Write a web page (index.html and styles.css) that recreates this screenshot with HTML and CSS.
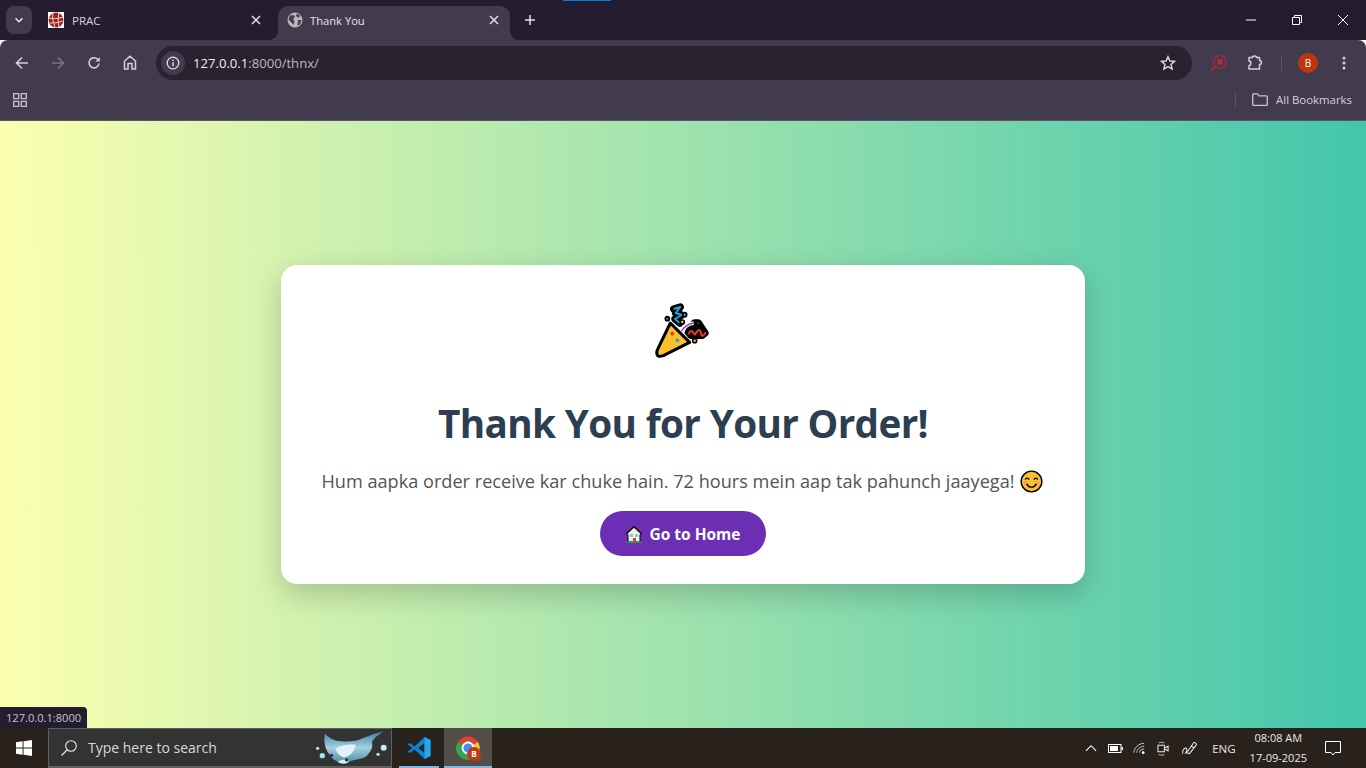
FILE: index.html
```html
<!DOCTYPE html>
<html lang="en">
<head>
    <meta charset="UTF-8">
    <meta name="viewport" content="width=device-width, initial-scale=1.0">
    <title>Thank You</title>
    <link rel="stylesheet" href="styles.css">
</head>
<body>

    <!-- Tab strip -->
    <div class="tabstrip">
        <div class="tab-search">
            <svg width="10" height="10" viewBox="0 0 10 10"><path d="M1.500 3.200 5 6.700l3.500-3.500" fill="none" stroke="#e8e3ec" stroke-width="1.600"/></svg>
        </div>
        <div class="tab tab-idle">
            <svg width="16" height="16" viewBox="0 0 16 16">
                <rect width="16" height="16" fill="#fff"/>
                <circle cx="8" cy="8" r="7.400" fill="#a3201f"/>
                <path d="M1 6c4 1 9 1 14-1M1.500 11c4 0 9 0 13-2M5 1c-1 4 0 10 2 14M11 1c-1 4-1 9 0 14" fill="none" stroke="#f2d6d4" stroke-width="1"/>
            </svg>
            <span class="tab-title">PRAC</span>
            <svg width="10" height="10" viewBox="0 0 10 10"><path d="M1 1l8 8M9 1l-8 8" stroke="#e4dfe8" stroke-width="1.500"/></svg>
        </div>
        <div class="tab tab-active">
            <svg width="16" height="16" viewBox="0 0 16 16">
                <circle cx="8" cy="8" r="7.500" fill="#b9b4bd"/>
                <path d="M3 3.500 6.500 3 8 5 6 7 7.500 9 6.500 13 4 10 1.500 7.500zM10 1.500l3.500 2.500-2.500 1.500-2-1.500zM11 8l3.500 0-1.500 4.500-2.500 1z" fill="#453c4e"/>
            </svg>
            <span class="tab-title">Thank You</span>
            <svg width="10" height="10" viewBox="0 0 10 10"><path d="M1 1l8 8M9 1l-8 8" stroke="#e4dfe8" stroke-width="1.500"/></svg>
        </div>
        <svg class="new-tab" width="10" height="10" viewBox="0 0 10 10"><path d="M5 0v10M0 5h10" stroke="#e4dfe8" stroke-width="1.500"/></svg>
        <div class="window-btns">
            <svg width="10" height="10" viewBox="0 0 10 10"><path d="M0 5h10" stroke="#fff" stroke-width="1"/></svg>
            <svg width="10" height="10" viewBox="0 0 10 10"><path d="M.5 2.500h7v7h-7zM2.500 2.500V.5h7v7H7.500" fill="none" stroke="#fff" stroke-width="1"/></svg>
            <svg width="10" height="10" viewBox="0 0 10 10"><path d="M0 0l10 10M10 0 0 10" stroke="#fff" stroke-width="1"/></svg>
        </div>
    </div>

    <!-- Toolbar with address bar -->
    <div class="toolbar">
        <div class="nav-btns">
            <svg width="14" height="14" viewBox="0 0 14 14"><path d="M13 7H2M7 1.500 1.500 7 7 12.500" fill="none" stroke="#d6d0da" stroke-width="1.600"/></svg>
            <svg width="14" height="14" viewBox="0 0 14 14"><path d="M1 7h11M7 1.500 12.500 7 7 12.500" fill="none" stroke="#7b7482" stroke-width="1.600"/></svg>
            <svg width="14" height="14" viewBox="0 0 14 14"><path d="M12 7.500A5 5 0 1 1 10.500 3.200" fill="none" stroke="#d6d0da" stroke-width="1.600"/><path d="M12.800 1v4.500H8.300z" fill="#d6d0da"/></svg>
            <svg width="14" height="15" viewBox="0 0 14 15"><path d="M1.500 14V6L7 1.200 12.500 6v8H9V8.500H5V14z" fill="none" stroke="#d6d0da" stroke-width="1.500"/></svg>
        </div>
        <div class="omnibox">
            <div class="site-info">
                <svg width="14" height="14" viewBox="0 0 14 14"><circle cx="7" cy="7" r="5.800" fill="none" stroke="#e4dfe8" stroke-width="1.300"/><path d="M7 6.200v4M7 3.600v1.400" stroke="#e4dfe8" stroke-width="1.400"/></svg>
            </div>
            <span class="url"><span class="url-host">127.0.0.1</span>:8000/thnx/</span>
            <svg width="16" height="16" viewBox="0 0 16 16"><path d="M8 1.700 9.900 6l4.600.4-3.500 3 1.100 4.600L8 11.600 3.900 14 5 9.400l-3.500-3L6.100 6z" fill="none" stroke="#e0dbe4" stroke-width="1.400"/></svg>
        </div>
        <div class="toolbar-right">
            <svg width="18" height="18" viewBox="0 0 18 18"><circle cx="10" cy="8" r="6.300" fill="none" stroke="#b32530" stroke-width="1.300"/><path d="M5.500 12.500 1 17" stroke="#b32530" stroke-width="1.800"/><path d="M7.500 5.500l5 5M12.500 5.500l-5 5" stroke="#c72a35" stroke-width="1.900"/></svg>
            <svg class="ext-icon" width="17" height="16" viewBox="0 0 17 16"><path d="M2 2.500h3.500c0-2 4-2 4 0h3v3c2.500 0 2.500 4 0 4v4.500H2v-3.500c2.500 0 2.500-4.500 0-4.500z" fill="none" stroke="#d6d0da" stroke-width="1.500" stroke-linejoin="round"/></svg>
            <div class="divider"></div>
            <div class="avatar">B</div>
            <svg class="menu-dots" width="4" height="14" viewBox="0 0 4 14"><circle cx="2" cy="2" r="1.500" fill="#d6d0da"/><circle cx="2" cy="7" r="1.500" fill="#d6d0da"/><circle cx="2" cy="12" r="1.500" fill="#d6d0da"/></svg>
        </div>
    </div>

    <!-- Bookmarks bar -->
    <div class="bookmarks">
        <svg width="14" height="14" viewBox="0 0 14 14"><path d="M.7.7h5v5h-5zM8.300.7h5v5h-5zM.7 8.300h5v5h-5zM8.300 8.300h5v5h-5z" fill="none" stroke="#c9c3ce" stroke-width="1.300"/></svg>
        <div class="all-bookmarks">
            <div class="divider divider-short"></div>
            <svg width="16" height="13" viewBox="0 0 16 13"><path d="M.7 11.500V1.700c0-.5.400-.9.900-.9h4l1.500 2h7.300c.5 0 .9.400.9.900v7.800c0 .5-.4.900-.9.900H1.600c-.5 0-.9-.4-.9-.9z" fill="none" stroke="#c9c3ce" stroke-width="1.300"/></svg>
            <span>All Bookmarks</span>
        </div>
    </div>

    <!-- Page -->
    <main class="page">
        <div class="card">
            <svg width="60" height="57" viewBox="70 40 180 171">
                <path d="M122 100 180 158 101 198Q78 206 82 183Z" fill="#fcc02d" stroke="#000" stroke-width="9" stroke-linejoin="round"/>
                <path d="M194 100 206 100 226 130 218 137 184 137 176 128Z" fill="#000" stroke="#000" stroke-width="22" stroke-linejoin="round"/>
                <path d="M132 58 152 52 138 70 156 76 136 88 150 100" fill="none" stroke="#000" stroke-width="22" stroke-linejoin="round" stroke-linecap="round"/>
                <path d="M132 58 152 52 138 70 156 76 136 88 150 100" fill="none" stroke="#22a5d8" stroke-width="6" stroke-linejoin="round"/>
                <path d="M176 134Q184 118 190 128T198 132 206 122 214 132 228 128" fill="none" stroke="#ea3a24" stroke-width="6"/>
                <path d="M155 125Q168 104 192 100" fill="none" stroke="#fff" stroke-width="10"/>
                <path d="M155 125Q168 104 192 100" fill="none" stroke="#7a4fc4" stroke-width="4"/>
                <g stroke="#000" stroke-width="5">
                    <circle cx="113" cy="87" r="6" fill="#7a4fc4"/>
                    <circle cx="165" cy="75" r="6" fill="#22a5d8"/>
                    <circle cx="158" cy="97" r="6" fill="#fce02d"/>
                    <circle cx="205" cy="100" r="5" fill="#ea3a24"/>
                    <circle cx="195" cy="153" r="6" fill="#fce02d"/>
                </g>
                <circle cx="128" cy="132" r="5.500" fill="#ea3a24"/>
                <circle cx="143" cy="152" r="5.500" fill="#22a5d8"/>
            </svg>
            <h1 class="card-title">Thank You for Your Order!</h1>
            <p class="card-text">Hum aapka order receive kar chuke hain. 72 hours mein aap tak pahunch jaayega!
                <svg width="23" height="23" viewBox="0 0 24 24">
                    <circle cx="12" cy="12" r="10.800" fill="#fcc02d" stroke="#000" stroke-width="1.500"/>
                    <circle cx="6" cy="14" r="2.200" fill="#f59a7c"/><circle cx="18" cy="14" r="2.200" fill="#f59a7c"/>
                    <path d="M5.500 10c1-2 3-2 4 0M14.500 10c1-2 3-2 4 0M7 14.500c2 4.500 8 4.500 10 0" fill="none" stroke="#000" stroke-width="1.400"/>
                </svg>
            </p>
            <a class="home-btn" href="#">
                <svg width="18" height="18" viewBox="0 0 18 18">
                    <path d="M3 8v9h12V8z" fill="#f4f1ec" stroke="#000" stroke-width="1"/>
                    <path d="M1 9 9 1.500 17 9" fill="#c9452c" stroke="#000" stroke-width="1.200"/>
                    <path d="M3 8.500 9 3l6 5.500v1H3z" fill="#f4f1ec"/>
                    <rect x="5" y="9" width="3" height="3" fill="#6fd0ec"/><rect x="10" y="9" width="3" height="3" fill="#6fd0ec"/>
                    <rect x="8" y="13" width="3" height="4" fill="#d8392b"/>
                    <path d="M1 17.300h16" stroke="#2e9a4a" stroke-width="1.400"/>
                </svg>
                Go to Home
            </a>
        </div>
        <div class="status-tip">127.0.0.1:8000</div>
    </main>

    <!-- Windows taskbar -->
    <footer class="taskbar">
        <div class="start-btn">
            <svg width="16" height="16" viewBox="0 0 17 17"><path d="M0 2.400 7 1.400v6.600H0zM8 1.300 17 0v8H8zM0 9h7v6.600L0 14.600zM8 9h9v8L8 15.700z" fill="#fff"/></svg>
        </div>
        <div class="search-box">
            <svg width="18" height="18" viewBox="0 0 18 18"><circle cx="11" cy="7" r="5.300" fill="none" stroke="#e8e8e8" stroke-width="1.100"/><path d="M7 11 1.500 16.500" stroke="#e8e8e8" stroke-width="1.300"/></svg>
            <span class="search-text">Type here to search</span>
            <svg width="73" height="35" viewBox="15 10 220 105">
                <defs>
                    <linearGradient id="rayFill" x1="0" y1="0" x2="0" y2="1">
                        <stop offset="0" stop-color="#3f7f9e"/>
                        <stop offset="0.5" stop-color="#a3cfe0"/>
                        <stop offset="1" stop-color="#4f8aa6"/>
                    </linearGradient>
                </defs>
                <circle cx="23" cy="65" r="5" fill="#b8e6f4"/>
                <circle cx="37" cy="87" r="8" fill="#a6e2f4"/>
                <circle cx="205" cy="83" r="5" fill="#b8e6f4"/>
                <circle cx="222" cy="63" r="9" fill="#c6eef8"/>
                <path d="M45 20C55 32 70 42 95 44 120 46 140 44 160 34 180 26 200 18 222 14 205 24 192 34 186 46 192 60 182 78 168 90 152 98 130 100 118 104 112 112 96 114 84 106 72 100 62 92 58 82 46 70 40 42 45 20Z" fill="url(#rayFill)"/>
                <path d="M76 66C92 54 116 52 138 54 136 70 124 86 106 92 92 92 82 80 76 66Z" fill="#e4f2f6"/>
                <path d="M84 106C92 98 108 98 118 104 112 112 96 114 84 106Z" fill="#dfeef3"/>
                <circle cx="65" cy="86" r="5" fill="#1c2f56"/>
                <circle cx="110" cy="100" r="5" fill="#1c2f56"/>
            </svg>
        </div>
        <div class="task-app task-vscode">
            <svg width="24" height="24" viewBox="0 0 24 24">
                <path d="M17.500 1 23.500 4v16l-6 3L7.500 13.500 2.800 17 .5 15.800 5.500 12 .5 8.200 2.800 7l4.700 3.500zM17.500 7l-6.300 5 6.300 5z" fill="#0a84d6"/>
                <path d="M17.500 1 23.500 4v16l-6 3z" fill="#27a6ee"/>
            </svg>
        </div>
        <div class="task-app task-chrome">
            <svg width="25" height="25" viewBox="0 0 25 25">
                <circle cx="12" cy="12" r="11.500" fill="#e3412f"/>
                <path d="M12 12 22 6a11.500 11.500 0 0 1-7 17.200z" fill="#f9c22e"/>
                <path d="M12 12 15 23.200A11.500 11.500 0 0 1 2 6z" fill="#32a350"/>
                <circle cx="12" cy="12" r="5.500" fill="#4a8af4" stroke="#fff" stroke-width="1.800"/>
                <circle cx="18" cy="18" r="7" fill="#c23a10"/>
                <text class="chrome-badge" x="18" y="21">B</text>
            </svg>
        </div>
        <div class="tray">
            <svg width="12" height="8" viewBox="0 0 13 8"><path d="M1 7 6.500 1.500 12 7" fill="none" stroke="#fff" stroke-width="1.200"/></svg>
            <svg width="15" height="9" viewBox="0 0 15 9"><rect x=".5" y=".5" width="12.500" height="8" fill="none" stroke="#fff"/><rect x="2" y="2" width="8" height="5" fill="#fff"/><rect x="13.500" y="3" width="1.500" height="3" fill="#fff"/></svg>
            <svg class="tray-wifi" width="13" height="14" viewBox="0 0 14 14"><g fill="none" stroke="#cfcfcf" stroke-width="1"><path d="M1 12C1 7 6 2 12 2"/><path d="M4 12c0-3 4-7 8-7"/><path d="M7 12c0-2 2-4 5-4"/></g><circle cx="11" cy="12" r="1.500" fill="#fff"/></svg>
            <svg width="12" height="17" viewBox="0 0 13 17"><path d="M1 5h7v7H1zM8 8l4-2v5l-4-2z" fill="none" stroke="#e8e8e8" stroke-width="1.100"/><path d="M2 2.500c2-1 4-1 6 0M2 15c2 1 4 1 6 0" fill="none" stroke="#cfcfcf"/></svg>
            <svg class="tray-pen" width="16" height="16" viewBox="0 0 17 16"><path d="M1 14c-1-3 1-6 3-6s1 5-1 6M5 13l7-10c1-2 4 0 3 2L8 14zM10 6l3 2" fill="none" stroke="#e8e8e8" stroke-width="1.100"/></svg>
            <span class="tray-lang">ENG</span>
            <div class="tray-clock"><span>08:08 AM</span><span>17-09-2025</span></div>
            <svg class="tray-notif" width="16" height="15" viewBox="0 0 16 15"><path d="M.5.500h15v11H10L8 14l-2-2.500H.5z" fill="none" stroke="#fff"/></svg>
        </div>
    </footer>

</body>
</html>
```

FILE: styles.css
```css
* {
    box-sizing: border-box;
}

body {
    margin: 0;
    height: 768px;
    overflow: hidden;
    display: flex;
    flex-direction: column;
    font-family: "Open Sans", "Liberation Sans", sans-serif;
}

svg {
    display: block;
    flex: none;
}

/* Browser tab strip */
.tabstrip {
    height: 40px;
    background-color: #241d30;
    display: flex;
    align-items: flex-start;
    padding: 6px 0 0 6px;
    position: relative;
}

.tabstrip::before {
    content: "";
    position: absolute;
    left: 563px;
    top: 0;
    width: 48px;
    height: 1px;
    background-color: #0a7bd8;
}

.tab-search {
    width: 26px;
    height: 28px;
    border-radius: 8px;
    background-color: #423a4d;
    display: flex;
    align-items: center;
    justify-content: center;
    margin-right: 6px;
}

.tab {
    height: 34px;
    padding-bottom: 6px;
    display: flex;
    align-items: center;
    gap: 8px;
    font-size: 11.5px;
    color: #d5d0d9;
    position: relative;
}

.tab-idle {
    width: 240px;
    padding-left: 10px;
    padding-right: 17px;
}

.tab-active {
    width: 232px;
    padding-left: 9px;
    padding-right: 11px;
    background-color: #423a4d;
    border-radius: 10px 10px 0 0;
    color: #e8e3ec;
    gap: 7px;
    font-size: 11.2px;
}

/* Curved feet on the active tab */
.tab-active::before,
.tab-active::after {
    content: "";
    position: absolute;
    bottom: 0;
    width: 10px;
    height: 10px;
}

.tab-active::before {
    left: -10px;
    background: radial-gradient(circle at 0 0, transparent 10px, #423a4d 10.5px);
}

.tab-active::after {
    right: -10px;
    background: radial-gradient(circle at 100% 0, transparent 10px, #423a4d 10.5px);
}

.tab-title {
    flex: 1;
}

.new-tab {
    margin: 9px 0 0 15px;
}

.window-btns {
    margin-left: auto;
    display: flex;
    align-items: center;
    gap: 36px;
    height: 28px;
    padding-right: 18px;
}

/* Toolbar */
.toolbar {
    height: 45px;
    background-color: #423a4d;
    border-radius: 8px 8px 0 0;
    display: flex;
    align-items: center;
    padding: 0 14px 0 15px;
}

.nav-btns {
    display: flex;
    align-items: center;
    gap: 22px;
    width: 141px;
}

.omnibox {
    width: 1036px;
    height: 34px;
    border-radius: 17px;
    background-color: #292230;
    display: flex;
    align-items: center;
    padding: 0 16px 0 5px;
}

.site-info {
    width: 24px;
    height: 24px;
    border-radius: 50%;
    background-color: #423a4d;
    display: flex;
    align-items: center;
    justify-content: center;
    margin-right: 8px;
}

.url {
    flex: 1;
    font-size: 13.1px;
    color: #bdb7c2;
}

.url-host {
    color: #f2eef5;
}

.toolbar-right {
    display: flex;
    align-items: center;
    margin-left: 18px;
    flex: 1;
}

.ext-icon {
    margin-left: 19px;
}

.divider {
    width: 1px;
    height: 16px;
    background-color: #5d5568;
    margin: 0 16px 0 17px;
}

.avatar {
    width: 20px;
    height: 20px;
    border-radius: 50%;
    background-color: #bf360c;
    color: #fff;
    font-size: 10px;
    display: flex;
    align-items: center;
    justify-content: center;
}

.menu-dots {
    margin-left: 24px;
}

/* Bookmarks bar */
.bookmarks {
    height: 36px;
    padding: 0 14px 6px 13px;
    background-color: #423a4d;
    border-bottom: 1px solid #5b5365;
    display: flex;
    align-items: center;
    justify-content: space-between;
}

.all-bookmarks {
    display: flex;
    align-items: center;
    font-size: 11.4px;
    color: #d5d0d9;
}

.divider-short {
    margin: 0 16px 0 0;
}

.all-bookmarks span {
    margin-left: 8px;
}

/* Page content */
.page {
    flex: 1;
    position: relative;
    background: linear-gradient(to right, #fbffb0, #43c6ac);
    display: flex;
    align-items: center;
    justify-content: center;
}

.card {
    width: 804px;
    padding: 38px 0 28px;
    background-color: #fff;
    border-radius: 16px;
    box-shadow: 0 10px 30px rgba(0, 0, 0, 0.2);
    display: flex;
    flex-direction: column;
    align-items: center;
}

.card-title {
    margin: 36px 0 1px;
    font-size: 38.7px;
    line-height: 54px;
    font-weight: 700;
    letter-spacing: -0.65px;
    color: #2c3e50;
}

.card-text {
    margin: 17px 2px 0 0;
    font-size: 18.15px;
    line-height: 26px;
    color: #555;
    display: flex;
    align-items: center;
    gap: 5px;
}

.home-btn {
    margin-top: 17px;
    height: 45px;
    width: 166px;
    border-radius: 23px;
    background-color: #6c2eb5;
    color: #fff;
    font-size: 15.5px;
    font-weight: 700;
    text-decoration: none;
    display: flex;
    align-items: center;
    justify-content: center;
    gap: 6px;
}

.status-tip {
    position: absolute;
    left: 0;
    bottom: 0;
    height: 21px;
    padding: 0 6px;
    background-color: #241d30;
    border-radius: 0 4px 0 0;
    color: #c9c3ce;
    font-size: 11.1px;
    line-height: 21px;
}

/* Windows taskbar */
.taskbar {
    height: 40px;
    background-color: #29221c;
    display: flex;
    align-items: stretch;
}

.start-btn {
    width: 48px;
    display: flex;
    align-items: center;
    justify-content: center;
}

.search-box {
    width: 344px;
    background-color: #333;
    border: 1px solid #5f5f5f;
    border-bottom-width: 2px;
    display: flex;
    align-items: center;
    padding: 0 3px 0 11px;
    color: #d8d8d8;
    font-size: 14px;
}

.search-text {
    margin-left: 10px;
    flex: 1;
}

.task-app {
    width: 48px;
    display: flex;
    align-items: center;
    justify-content: center;
    position: relative;
}

.task-app::after {
    content: "";
    position: absolute;
    bottom: 0;
    height: 2px;
    background-color: #76b9ed;
}

.task-vscode {
    margin-left: 3px;
}

.task-vscode::after {
    left: 4px;
    right: 4px;
}

.task-chrome {
    margin-left: 1px;
    background-color: #544e49;
}

.task-chrome::after {
    left: 0;
    right: 0;
}

.chrome-badge {
    font-size: 8px;
    font-weight: 700;
    fill: #fff;
    text-anchor: middle;
}

.tray {
    margin-left: auto;
    display: flex;
    align-items: center;
    gap: 11px;
    padding-right: 25px;
    color: #e8e8e8;
}

.tray-wifi {
    margin-left: -1px;
}

.tray-pen {
    margin-left: 2px;
}

.tray-lang {
    margin-left: 3px;
    font-size: 11.5px;
}

.tray-clock {
    margin-left: 3px;
    display: flex;
    flex-direction: column;
    align-items: center;
    font-size: 11px;
    line-height: 20px;
}

.tray-notif {
    margin-left: 7px;
}
```
